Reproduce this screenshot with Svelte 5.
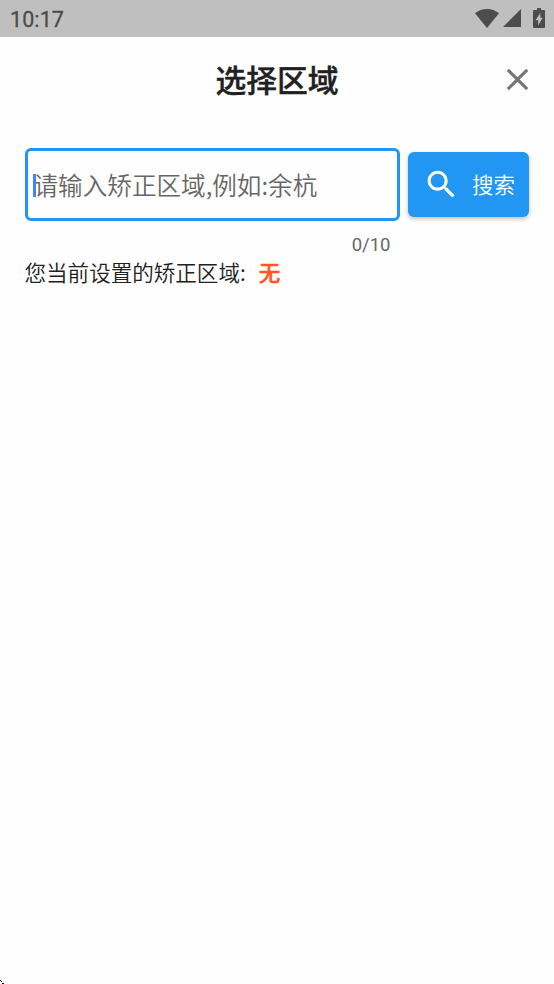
<script>
  let region = $state('');
  const maxLength = 10;
  const current = '无';
</script>

<div class="screen">
  <div class="status">
    <span class="time">10:17</span>
    <div class="indicators">
      <svg class="wifi" width="24" height="19" viewBox="0 0 24 19"><path d="M0 4.2C3.4 1.5 7.6 0 12 0s8.600 1.500 12 4.200L12 19z" /></svg>
      <svg class="signal" width="18" height="18" viewBox="0 0 18 18"><path d="M0 18H18V0z" /></svg>
      <svg class="battery" width="12" height="20" viewBox="0 0 12 20"><path fill-rule="evenodd" d="M4 0h4v2h2.700C11.500 2 12 2.500 12 3.300v15.400c0 .8-.5 1.300-1.300 1.300H1.300C.5 20 0 19.500 0 18.700V3.300C0 2.500.5 2 1.300 2H4zM7.300 5L2.500 12.200H5.200V17.500L9.600 9.800H7.300z" /></svg>
    </div>
  </div>

  <header>
    <h1>选择区域</h1>
    <button class="close" aria-label="关闭">
      <svg width="37" height="37" viewBox="0 0 24 24"><path d="M19 6.410L17.590 5 12 10.590 6.410 5 5 6.410 10.590 12 5 17.590 6.410 19 12 13.410 17.590 19 19 17.590 13.410 12z" /></svg>
    </button>
  </header>

  <main>
    <div class="row">
      <div class="field">
        <input bind:value={region} maxlength={maxLength} placeholder="请输入矫正区域,例如:余杭" />
        <i class="caret"></i>
      </div>
      <button class="search">
        <svg width="37" height="37" viewBox="0 0 24 24"><path d="M15.500 14h-.79l-.28-.27C15.410 12.590 16 11.110 16 9.500 16 5.910 13.090 3 9.500 3S3 5.910 3 9.500 5.910 16 9.500 16c1.610 0 3.090-.59 4.230-1.570l.27.28v.79l5 4.990L20.490 19l-4.990-5zm-6 0C7.010 14 5 11.990 5 9.500S7.010 5 9.500 5 14 7.010 14 9.500 11.990 14 9.500 14z" /></svg>
        <span>搜索</span>
      </button>
    </div>
    <div class="counter">{region.length}/{maxLength}</div>
    <p class="current"><span>您当前设置的矫正区域:</span><strong>{current}</strong></p>
  </main>

  <svg class="corner" width="4" height="4" viewBox="0 0 4 4" shape-rendering="crispEdges"><path d="M0 0h1v1H0zM1 1h1v1H1zM2 3h2v1H2z" /></svg>
</div>

<style>
  :global(body) { background: #fff; }
  .screen {
    position: relative;
    width: 554px;
    height: 984px;
    overflow: hidden;
    background: #fefefe;
    color: #212121;
    font-family: Roboto, "Noto Sans CJK SC", sans-serif;
  }
  button { border: 0; padding: 0; font: inherit; }
  svg { display: block; }
  .status {
    box-sizing: border-box;
    height: 37px;
    padding: 0 9.500px 0 10px;
    display: flex;
    align-items: center;
    justify-content: space-between;
    background: #bfbfbf;
    color: #4c4c4c;
  }
  .time { padding-top: 2px; font-size: 21.500px; line-height: 36px; font-weight: 400; letter-spacing: 0.1px; -webkit-text-stroke: 0.3px #4c4c4c; }
  .indicators { display: flex; align-items: center; fill: #4c4c4c; padding-bottom: 1px; }
  .signal { margin: 0 12px 0 4px; }
  header {
    height: 86px;
    display: grid;
    grid-template-columns: 74px 1fr 74px;
    align-items: center;
  }
  h1 {
    grid-column: 2;
    margin: 0;
    padding-top: 3px;
    text-align: center;
    font-size: 30.800px;
    line-height: 40px;
    font-weight: 500;
    -webkit-text-stroke: 0.400px #212121;
  }
  .close { background: none; fill: #757575; width: 74px; height: 38px; display: flex; justify-content: center; }
  main { padding: 25px 24.500px 0; }
  .row { display: flex; align-items: center; gap: 8px; }
  .field {
    position: relative;
    box-sizing: border-box;
    width: 375.500px;
    height: 73px;
    border: 3px solid #2196f3;
    border-radius: 6px;
  }
  input {
    box-sizing: border-box;
    width: 100%;
    height: 100%;
    border: 0;
    outline: 0;
    padding: 0 6px 1px;
    background: transparent;
    font: 350 24.600px "Noto Sans CJK SC", sans-serif;
    color: #212121;
  }
  input::placeholder { color: #666; opacity: 1; }
  .caret { position: absolute; left: 5.500px; top: 23px; width: 3px; height: 23px; background: #4285f4; }
  .search {
    width: 121.300px;
    height: 65px;
    display: flex;
    align-items: center;
    padding-left: 15px;
    gap: 12px;
    border-radius: 6px;
    background: #2196f3;
    color: #fff;
    fill: #fff;
    font-size: 21.500px;
    font-weight: 350;
    box-shadow: 0 2px 4px rgba(0, 0, 0, 0.25);
  }
  .search span { padding-bottom: 2px; }
  .counter {
    width: 366px;
    margin-top: 12px;
    text-align: right;
    font-size: 18.500px;
    line-height: 24px;
    letter-spacing: 0;
    color: #666;
  }
  .current {
    margin: -1px 0 0;
    display: flex;
    gap: 13px;
    font-family: "Noto Sans CJK SC", sans-serif;
    font-size: 21.550px;
    font-weight: 350;
    line-height: 32px;
  }
  strong { color: #ff5722; font-weight: 500; -webkit-text-stroke: 0.500px #ff5722; }
  .corner { position: absolute; left: 0; bottom: 0; fill: #111; }
</style>
